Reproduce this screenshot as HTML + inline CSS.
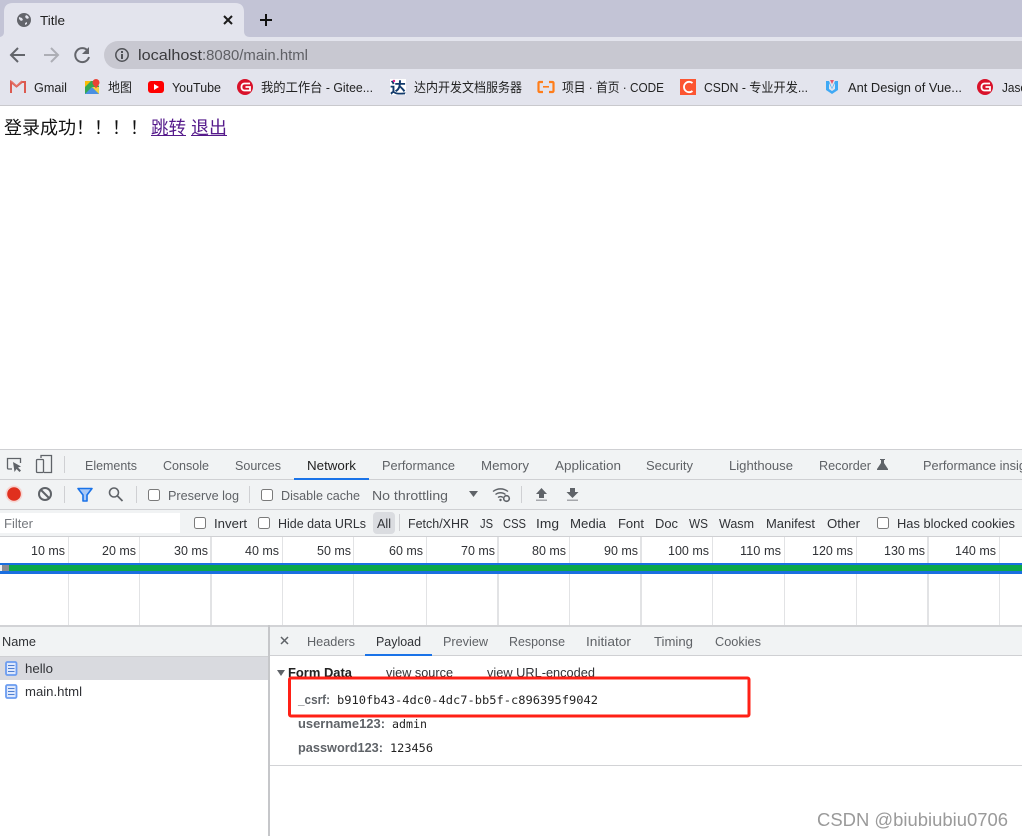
<!DOCTYPE html>
<html><head><meta charset="utf-8"><title>Title</title>
<style>
html,body{margin:0;padding:0;background:#fff;width:1022px;height:836px;overflow:hidden}
svg{display:block}
text{font-family:"Liberation Sans","Noto Sans CJK SC",sans-serif;font-size:13px;fill:#5f6266;white-space:pre}
.b{fill:#222;font-size:13px}
.m{font-family:"DejaVu Sans Mono","Liberation Mono",monospace;font-size:11.5px;fill:#222}
.k{font-weight:bold;font-size:12.5px;fill:#5f6368}
</style></head><body>
<svg xmlns="http://www.w3.org/2000/svg" width="1022" height="836" viewBox="0 0 1022 836">
<rect width="1022" height="836" fill="#fff"/>
<!-- browser chrome -->
<rect width="1022" height="37" fill="#c3c4d6"/>
<rect y="37" width="1022" height="68" fill="#e3e4ed"/>
<rect y="105" width="1022" height="1" fill="#c9c9cd"/>
<path d="M0 37Q4 36 4 32V12Q4 3 13 3H235Q244 3 244 12V31Q244 37 250 37Z" fill="#e3e4ed"/>
<circle cx="24" cy="20" r="7" fill="#63656b"/>
<path d="M19 17l3 1 1 2-2 1-2-2zM26 15l2 1 1 2-2 1-2-2zM25 23l2-1 0 2-2 1z" fill="#e3e4ed"/>
<text x="40" y="25" textLength="25" lengthAdjust="spacingAndGlyphs" style="fill:#222">Title</text>
<path d="M224 16l8 8M232 16l-8 8" stroke="#1c1c1c" stroke-width="2" fill="none"/>
<path d="M266 14v12M260 20h12" stroke="#111" stroke-width="2" fill="none"/>
<path d="M25 55H12M18 48l-7 7 7 7" stroke="#63656b" stroke-width="2" fill="none"/>
<path d="M44 55H57M51 48l7 7-7 7" stroke="#adaeb5" stroke-width="2" fill="none"/>
<path d="M87.500 50.500A7 7 0 1 0 89 57" stroke="#63656b" stroke-width="2" fill="none"/>
<path d="M89 47v7h-7z" fill="#63656b"/>
<path d="M118 41H1022V69H118A14 14 0 0 1 118 41Z" fill="#c8c8d1"/>
<circle cx="122" cy="55" r="6.200" fill="none" stroke="#4f5156" stroke-width="1.500"/>
<rect x="121" y="54" width="2" height="5" fill="#4f5156"/><rect x="121" y="51" width="2" height="2" fill="#4f5156"/>
<text x="138" y="60" textLength="64" lengthAdjust="spacingAndGlyphs" style="font-size:15px;fill:#3a3a3d">localhost</text>
<text x="202" y="60" textLength="106" lengthAdjust="spacingAndGlyphs" style="font-size:15px;fill:#5f6065">:8080/main.html</text>
<!-- bookmarks -->
<path d="M11 93V82l5.500 4.500 5.500-4.500 3 0V93" fill="none" stroke="#dc5a50" stroke-width="2"/>
<path d="M11 81l5.500 5 5.500-5" fill="none" stroke="#e57368" stroke-width="1.500"/>
<text class="b" x="34" y="92" textLength="33" lengthAdjust="spacingAndGlyphs">Gmail</text>
<path d="M85 81h9l5 5v8H85z" fill="#34a853"/><path d="M85 94l7-7 7 7z" fill="#4a90e2"/><path d="M85 81h6l-6 6z" fill="#fbbc05"/><path d="M92 87l7 7v-7z" fill="#f5d142"/>
<path d="M96 79a3.500 3.500 0 0 1 3.500 3.500c0 2-2 3.500-3.500 6c-1.500-2.500-3.500-4-3.500-6A3.500 3.500 0 0 1 96 79z" fill="#ea4335"/>
<text class="b" x="108" y="92" textLength="24" lengthAdjust="spacingAndGlyphs">地图</text>
<rect x="148" y="81" width="16" height="12" rx="3" fill="#f00"/><path d="M154 84l5 3-5 3z" fill="#fff"/>
<text class="b" x="172" y="92" textLength="49" lengthAdjust="spacingAndGlyphs">YouTube</text>
<circle cx="245" cy="87" r="8" fill="#d9122a"/><path d="M250 83.500H244.500a3 3 0 0 0-3 3v1a3 3 0 0 0 3 3H250V87H245.500" fill="none" stroke="#fff" stroke-width="1.800"/>
<text class="b" x="261" y="92" textLength="112" lengthAdjust="spacingAndGlyphs">我的工作台 - Gitee...</text>
<rect x="390" y="79" width="16" height="16" fill="#fff"/>
<text x="390" y="93" textLength="16" lengthAdjust="spacingAndGlyphs" style="font-size:15px;font-weight:bold;fill:#123a6b">达</text>
<circle cx="394" cy="81" r="1.200" fill="#e0218a"/>
<text class="b" x="414" y="92" textLength="108" lengthAdjust="spacingAndGlyphs">达内开发文档服务器</text>
<path d="M543 82h-3.500a1 1 0 0 0-1 1v8a1 1 0 0 0 1 1H543M549 82h3.500a1 1 0 0 1 1 1v8a1 1 0 0 1-1 1H549" fill="none" stroke="#ff7d1a" stroke-width="2.200"/>
<rect x="543" y="86" width="6" height="1.600" fill="#ff7d1a"/>
<text class="b" x="562" y="92" textLength="102" lengthAdjust="spacingAndGlyphs">项目 · 首页 · CODE</text>
<rect x="680" y="79" width="16" height="16" fill="#fc5531"/>
<path d="M692.500 83a5.200 5.200 0 1 0 0 8" fill="none" stroke="#fff" stroke-width="1.800"/>
<text class="b" x="704" y="92" textLength="104" lengthAdjust="spacingAndGlyphs">CSDN - 专业开发...</text>
<path d="M826 81l3 0 3 7 3-7 3 0v9l-6 4-6-4z" fill="#3fa9f5"/><path d="M830 80h4l-2 4z" fill="#e9566b"/><path d="M829 83l3 6 3-6v6l-3 2-3-2z" fill="#e3e4ed"/>
<text class="b" x="848" y="92" textLength="114" lengthAdjust="spacingAndGlyphs">Ant Design of Vue...</text>
<circle cx="985" cy="87" r="8" fill="#d9122a"/><path d="M990 83.500H984.500a3 3 0 0 0-3 3v1a3 3 0 0 0 3 3H990V87H985.500" fill="none" stroke="#fff" stroke-width="1.800"/>
<text class="b" x="1002" y="92" textLength="25" lengthAdjust="spacingAndGlyphs">Jaso</text>
<!-- page -->
<text x="4" y="134" textLength="144" lengthAdjust="spacingAndGlyphs" style="font-size:18px;fill:#111">登录成功！！！！</text>
<text x="151" y="134" textLength="35" lengthAdjust="spacingAndGlyphs" style="font-size:18px;fill:#551a8b">跳转</text>
<text x="191" y="134" textLength="36" lengthAdjust="spacingAndGlyphs" style="font-size:18px;fill:#551a8b">退出</text>
<rect x="151" y="135" width="35" height="1" fill="#551a8b"/><rect x="191" y="135" width="36" height="1" fill="#551a8b"/>
<!-- devtools rows -->
<rect y="449" width="1022" height="1" fill="#cfd0d3"/>
<rect y="450" width="1022" height="87" fill="#f1f3f4"/>
<rect y="479" width="1022" height="1" fill="#cfd0d3"/>
<rect y="509" width="1022" height="1" fill="#cfd0d3"/>
<rect y="536" width="1022" height="1" fill="#cfd0d3"/>
<!-- row1 icons -->
<path d="M12 469H8.500a1 1 0 0 1-1-1V458.500h13V463" fill="none" stroke="#5f6368" stroke-width="1.300"/>
<path d="M13 462l1.500 10 2-3 3 3 1.500-1.500-3-3 3-1z" fill="#5f6368"/>
<path d="M41 458v-2.500h10.500v17H44" fill="none" stroke="#5f6368" stroke-width="1.300"/>
<rect x="36.500" y="459.500" width="7" height="13" rx="1" fill="none" stroke="#5f6368" stroke-width="1.300"/>
<rect x="64" y="456" width="1" height="17" fill="#cfd0d3"/>
<text x="85" y="470" textLength="52" lengthAdjust="spacingAndGlyphs">Elements</text>
<text x="163" y="470" textLength="46" lengthAdjust="spacingAndGlyphs">Console</text>
<text x="235" y="470" textLength="46" lengthAdjust="spacingAndGlyphs">Sources</text>
<text x="307" y="470" textLength="49" lengthAdjust="spacingAndGlyphs" style="fill:#222">Network</text>
<text x="382" y="470" textLength="73" lengthAdjust="spacingAndGlyphs">Performance</text>
<text x="481" y="470" textLength="48" lengthAdjust="spacingAndGlyphs">Memory</text>
<text x="555" y="470" textLength="66" lengthAdjust="spacingAndGlyphs">Application</text>
<text x="646" y="470" textLength="47" lengthAdjust="spacingAndGlyphs">Security</text>
<text x="729" y="470" textLength="64" lengthAdjust="spacingAndGlyphs">Lighthouse</text>
<text x="819" y="470" textLength="52" lengthAdjust="spacingAndGlyphs">Recorder</text>
<path d="M880 459h5v1h-1v3l4 6v1h-11v-1l4-6v-3h-1z" fill="#5f6368"/>
<text x="923" y="470" textLength="120" lengthAdjust="spacingAndGlyphs">Performance insights</text>
<rect x="294" y="478" width="75" height="2" fill="#1a73e8"/>
<!-- row2 -->
<circle cx="14" cy="494" r="8.500" fill="#f6d5d2"/><circle cx="14" cy="494" r="6.800" fill="#e0301e"/>
<circle cx="45" cy="494" r="6" fill="none" stroke="#5f6368" stroke-width="2"/><path d="M41 490l8 8" stroke="#5f6368" stroke-width="2"/>
<rect x="64" y="486" width="1" height="17" fill="#cfd0d3"/>
<path d="M78 488.500h14l-5 6.500v6h-4v-6z" fill="#a9c9f7" stroke="#1a73e8" stroke-width="1.600" stroke-linejoin="round"/>
<circle cx="114" cy="492.500" r="4.500" fill="none" stroke="#5f6368" stroke-width="1.600"/><path d="M117.500 496l5 5" stroke="#5f6368" stroke-width="1.800"/>
<rect x="136" y="486" width="1" height="17" fill="#cfd0d3"/>
<rect x="148.500" y="489.500" width="11" height="11" rx="2" fill="#fff" stroke="#7a7a7a"/>
<text x="168" y="500" textLength="71" lengthAdjust="spacingAndGlyphs">Preserve log</text>
<rect x="249" y="486" width="1" height="17" fill="#cfd0d3"/>
<rect x="261.500" y="489.500" width="11" height="11" rx="2" fill="#fff" stroke="#7a7a7a"/>
<text x="281" y="500" textLength="79" lengthAdjust="spacingAndGlyphs">Disable cache</text>
<text x="372" y="500" textLength="76" lengthAdjust="spacingAndGlyphs">No throttling</text>
<path d="M469 491h9l-4.500 6z" fill="#5f6368"/>
<path d="M493 491.500a12 12 0 0 1 15 0M495.500 494.500a8 8 0 0 1 10 0M498 497.500a4 4 0 0 1 5 0" fill="none" stroke="#5f6368" stroke-width="1.400"/>
<circle cx="500.500" cy="500" r="1.200" fill="#5f6368"/><circle cx="506.500" cy="498.500" r="2.800" fill="#f1f3f4" stroke="#5f6368" stroke-width="1.600"/>
<rect x="521" y="486" width="1" height="17" fill="#cfd0d3"/>
<path d="M541.500 488l5.500 6h-3v4h-5v-4h-3z" fill="#5f6368"/><rect x="536" y="499.500" width="11" height="1.500" fill="#a5a7ab"/>
<path d="M570 488h5v4h3.500l-6 6-6-6h3.500z" fill="#5f6368"/><rect x="567" y="499.500" width="11" height="1.500" fill="#a5a7ab"/>
<!-- row3 -->
<rect y="513" width="180" height="20" fill="#fff"/>
<text x="4" y="528" textLength="29" lengthAdjust="spacingAndGlyphs" style="fill:#75787d">Filter</text>
<rect x="194.500" y="517.500" width="11" height="11" rx="2" fill="#fff" stroke="#7a7a7a"/>
<text x="214" y="528" textLength="33" lengthAdjust="spacingAndGlyphs" style="fill:#303236">Invert</text>
<rect x="258.500" y="517.500" width="11" height="11" rx="2" fill="#fff" stroke="#7a7a7a"/>
<text x="278" y="528" textLength="88" lengthAdjust="spacingAndGlyphs" style="fill:#303236">Hide data URLs</text>
<rect x="373" y="512" width="22" height="22" rx="4" fill="#dadce0"/>
<text x="377" y="528" textLength="14" lengthAdjust="spacingAndGlyphs" style="fill:#303236">All</text>
<rect x="399" y="514" width="1" height="17" fill="#cfd0d3"/>
<text x="408" y="528" textLength="61" lengthAdjust="spacingAndGlyphs" style="fill:#303236">Fetch/XHR</text>
<text x="480" y="528" textLength="13" lengthAdjust="spacingAndGlyphs" style="fill:#303236">JS</text>
<text x="503" y="528" textLength="23" lengthAdjust="spacingAndGlyphs" style="fill:#303236">CSS</text>
<text x="536" y="528" textLength="23" lengthAdjust="spacingAndGlyphs" style="fill:#303236">Img</text>
<text x="570" y="528" textLength="36" lengthAdjust="spacingAndGlyphs" style="fill:#303236">Media</text>
<text x="618" y="528" textLength="26" lengthAdjust="spacingAndGlyphs" style="fill:#303236">Font</text>
<text x="655" y="528" textLength="23" lengthAdjust="spacingAndGlyphs" style="fill:#303236">Doc</text>
<text x="689" y="528" textLength="19" lengthAdjust="spacingAndGlyphs" style="fill:#303236">WS</text>
<text x="719" y="528" textLength="35" lengthAdjust="spacingAndGlyphs" style="fill:#303236">Wasm</text>
<text x="766" y="528" textLength="49" lengthAdjust="spacingAndGlyphs" style="fill:#303236">Manifest</text>
<text x="827" y="528" textLength="33" lengthAdjust="spacingAndGlyphs" style="fill:#303236">Other</text>
<rect x="877.500" y="517.500" width="11" height="11" rx="2" fill="#fff" stroke="#7a7a7a"/>
<text x="897" y="528" textLength="118" lengthAdjust="spacingAndGlyphs" style="fill:#303236">Has blocked cookies</text>
<!-- timeline -->
<g fill="#e2e3e5">
<rect x="68" y="537" width="1" height="89"/><rect x="139" y="537" width="1" height="89"/><rect x="210" y="537" width="2" height="89"/><rect x="282" y="537" width="1" height="89"/><rect x="353" y="537" width="1" height="89"/><rect x="426" y="537" width="1" height="89"/><rect x="497" y="537" width="2" height="89"/><rect x="569" y="537" width="1" height="89"/><rect x="640" y="537" width="2" height="89"/><rect x="712" y="537" width="1" height="89"/><rect x="784" y="537" width="1" height="89"/><rect x="856" y="537" width="1" height="89"/><rect x="927" y="537" width="2" height="89"/><rect x="999" y="537" width="1" height="89"/>
</g>
<text x="31" y="555" textLength="34" lengthAdjust="spacingAndGlyphs" style="fill:#303236">10 ms</text>
<text x="102" y="555" textLength="34" lengthAdjust="spacingAndGlyphs" style="fill:#303236">20 ms</text>
<text x="174" y="555" textLength="34" lengthAdjust="spacingAndGlyphs" style="fill:#303236">30 ms</text>
<text x="245" y="555" textLength="34" lengthAdjust="spacingAndGlyphs" style="fill:#303236">40 ms</text>
<text x="317" y="555" textLength="34" lengthAdjust="spacingAndGlyphs" style="fill:#303236">50 ms</text>
<text x="389" y="555" textLength="34" lengthAdjust="spacingAndGlyphs" style="fill:#303236">60 ms</text>
<text x="461" y="555" textLength="34" lengthAdjust="spacingAndGlyphs" style="fill:#303236">70 ms</text>
<text x="532" y="555" textLength="34" lengthAdjust="spacingAndGlyphs" style="fill:#303236">80 ms</text>
<text x="604" y="555" textLength="34" lengthAdjust="spacingAndGlyphs" style="fill:#303236">90 ms</text>
<text x="668" y="555" textLength="41" lengthAdjust="spacingAndGlyphs" style="fill:#303236">100 ms</text>
<text x="740" y="555" textLength="41" lengthAdjust="spacingAndGlyphs" style="fill:#303236">110 ms</text>
<text x="812" y="555" textLength="41" lengthAdjust="spacingAndGlyphs" style="fill:#303236">120 ms</text>
<text x="884" y="555" textLength="41" lengthAdjust="spacingAndGlyphs" style="fill:#303236">130 ms</text>
<text x="955" y="555" textLength="41" lengthAdjust="spacingAndGlyphs" style="fill:#303236">140 ms</text>
<rect y="563" width="1022" height="11" fill="#1a6fe0"/>
<rect y="565" width="1022" height="6" fill="#0aa84a"/>
<rect y="565" width="2" height="6" fill="#f0f0f0"/><rect x="2" y="565" width="7" height="6" fill="#8b8b92"/>
<!-- lower panels -->
<rect y="625" width="1022" height="2" fill="#d2d3d6"/>
<rect y="627" width="268" height="29" fill="#f1f3f4"/>
<rect x="270" y="627" width="752" height="28" fill="#f1f3f4"/>
<rect y="656" width="268" height="1" fill="#cfd0d3"/>
<rect x="270" y="655" width="752" height="1" fill="#cfd0d3"/>
<rect x="268" y="625" width="2" height="211" fill="#c6c7ca"/>
<text x="2" y="646" textLength="34" lengthAdjust="spacingAndGlyphs" style="fill:#303236">Name</text>
<rect y="657" width="268" height="23" fill="#d9dadf"/>
<rect x="6" y="662" width="10.500" height="13" rx="1.500" fill="#dfe9fc" stroke="#6b9cf0" stroke-width="1.800"/>
<path d="M8 665.500h6.500M8 668.500h6.500M8 671.500h6.500" stroke="#4f7fd0" stroke-width="1"/>
<rect x="6" y="685" width="10.500" height="13" rx="1.500" fill="#dfe9fc" stroke="#6b9cf0" stroke-width="1.800"/>
<path d="M8 688.500h6.500M8 691.500h6.500M8 694.500h6.500" stroke="#4f7fd0" stroke-width="1"/>
<text x="25" y="673" textLength="28" lengthAdjust="spacingAndGlyphs" style="fill:#303236">hello</text>
<text x="25" y="696" textLength="57" lengthAdjust="spacingAndGlyphs" style="fill:#303236">main.html</text>
<path d="M281 637l7 7M288 637l-7 7" stroke="#5f6368" stroke-width="1.500"/>
<text x="307" y="646" textLength="48" lengthAdjust="spacingAndGlyphs">Headers</text>
<text x="376" y="646" textLength="45" lengthAdjust="spacingAndGlyphs" style="fill:#303236">Payload</text>
<text x="443" y="646" textLength="45" lengthAdjust="spacingAndGlyphs">Preview</text>
<text x="509" y="646" textLength="56" lengthAdjust="spacingAndGlyphs">Response</text>
<text x="586" y="646" textLength="45" lengthAdjust="spacingAndGlyphs">Initiator</text>
<text x="654" y="646" textLength="39" lengthAdjust="spacingAndGlyphs">Timing</text>
<text x="715" y="646" textLength="46" lengthAdjust="spacingAndGlyphs">Cookies</text>
<rect x="365" y="654" width="67" height="2" fill="#1a73e8"/>
<path d="M277 670h8l-4 6z" fill="#5f6368"/>
<text x="288" y="677" textLength="64" lengthAdjust="spacingAndGlyphs" style="font-weight:bold;fill:#222">Form Data</text>
<text x="386" y="677" textLength="67" lengthAdjust="spacingAndGlyphs" style="fill:#303236">view source</text>
<text x="487" y="677" textLength="108" lengthAdjust="spacingAndGlyphs" style="fill:#303236">view URL-encoded</text>
<rect x="289.500" y="678" width="459.500" height="38" rx="1.500" fill="#fff" stroke="#ff2016" stroke-width="3"/>
<text class="k" x="298" y="704" textLength="32" lengthAdjust="spacingAndGlyphs">_csrf:</text>
<text class="m" x="337" y="704" textLength="261" lengthAdjust="spacingAndGlyphs">b910fb43-4dc0-4dc7-bb5f-c896395f9042</text>
<text class="k" x="298" y="728" textLength="87" lengthAdjust="spacingAndGlyphs">username123:</text>
<text class="m" x="392" y="728" textLength="35" lengthAdjust="spacingAndGlyphs">admin</text>
<text class="k" x="298" y="752" textLength="85" lengthAdjust="spacingAndGlyphs">password123:</text>
<text class="m" x="390" y="752" textLength="43" lengthAdjust="spacingAndGlyphs">123456</text>
<rect x="270" y="765" width="752" height="1" fill="#d2d3d6"/>
<text x="817" y="826" textLength="191" lengthAdjust="spacingAndGlyphs" style="font-size:18px;fill:#9a9a9a">CSDN @biubiubiu0706</text>
</svg>
</body></html>
